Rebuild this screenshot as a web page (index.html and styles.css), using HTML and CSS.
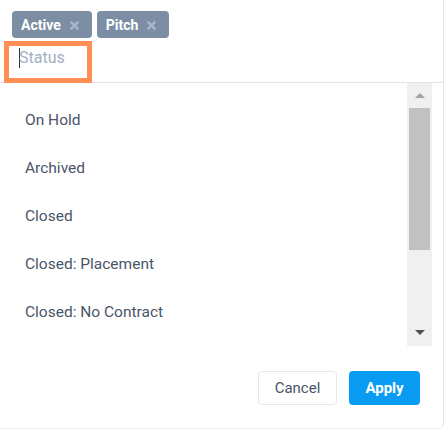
FILE: index.html
```html
<!DOCTYPE html>
<html>
<head>
<meta charset="utf-8">
<link rel="stylesheet" href="styles.css">
</head>
<body>
<div class="panel">
  <div class="tags">
    <span class="chip">Active <svg class="chip-x" viewBox="0 0 10 10"><path d="M1.5 1.5 L8.5 8.5 M8.5 1.5 L1.5 8.5"/></svg></span>
    <span class="chip">Pitch <svg class="chip-x" viewBox="0 0 10 10"><path d="M1.5 1.5 L8.5 8.5 M8.5 1.5 L1.5 8.5"/></svg></span>
  </div>
  <div class="search-row">
    <div class="search-box"><span class="cursor"></span><span class="placeholder">Status</span></div>
  </div>
  <div class="list-wrap">
    <ul class="list">
      <li>On Hold</li>
      <li>Archived</li>
      <li>Closed</li>
      <li>Closed: Placement</li>
      <li>Closed: No Contract</li>
    </ul>
    <div class="scrollbar">
      <div class="arrow arrow-up"></div>
      <div class="track"><div class="thumb"></div></div>
      <div class="arrow arrow-down"></div>
    </div>
  </div>
  <div class="footer">
    <button class="btn btn-cancel">Cancel</button>
    <button class="btn btn-apply">Apply</button>
  </div>
</div>
</body>
</html>
```

FILE: styles.css
```css
html, body {
  margin: 0;
  padding: 0;
  background: #ffffff;
}
body {
  font-family: Roboto, "Liberation Sans", sans-serif;
  width: 447px;
  height: 430px;
  overflow: hidden;
}
.panel {
  width: 444px;
  height: 429px;
  box-sizing: border-box;
  border-right: 1px solid #e3e6ea;
  border-bottom: 1px solid #eef0f2;
  border-radius: 0 0 6px 0;
  display: flex;
  flex-direction: column;
}
.tags {
  display: flex;
  gap: 5px;
  padding: 11px 12px 0;
}
.chip {
  display: inline-flex;
  align-items: center;
  height: 27px;
  padding: 0 12px 0 9px;
  background: #7b8ea4;
  color: #ffffff;
  font-weight: 700;
  font-size: 14px;
  border-radius: 4px;
  box-sizing: border-box;
}
.chip-x {
  width: 11px;
  height: 11px;
  margin-left: 8px;
  margin-top: 1px;
  stroke: #aab7c6;
  stroke-width: 2.2;
  fill: none;
}
.search-row {
  height: 44px;
  border-bottom: 1px solid #e2e5e9;
  display: flex;
  align-items: stretch;
}
.search-box {
  width: 88px;
  margin: 3px 0 -1px 4px;
  box-sizing: border-box;
  border: 5px solid #ff8f55;
  display: flex;
  align-items: center;
  padding-left: 10px;
  padding-bottom: 9px;
}
.cursor {
  width: 1px;
  height: 20px;
  background: #333333;
  margin-right: -1px;
}
.placeholder {
  color: #a3b0c0;
  font-size: 16px;
}
.list-wrap {
  display: flex;
  height: 263px;
  padding-right: 11px;
}
.list {
  flex: 1;
  list-style: none;
  margin: 0;
  padding: 13px 0 0 25px;
  overflow: hidden;
}
.list li {
  height: 48px;
  line-height: 48px;
  font-size: 15.5px;
  color: #4a5568;
}
.scrollbar {
  width: 25px;
  background: #f0f0f0;
  display: flex;
  flex-direction: column;
  align-items: center;
}
.arrow {
  width: 0;
  height: 0;
  border-left: 5px solid transparent;
  border-right: 5px solid transparent;
}
.arrow-up {
  border-bottom: 5px solid #a3a3a3;
  margin: 10px 0 10px;
}
.arrow-down {
  border-top: 5px solid #505050;
  margin: 0 0 11px;
}
.track {
  flex: 1;
  width: 21px;
}
.thumb {
  height: 142px;
  background: #c1c1c1;
}
.footer {
  display: flex;
  justify-content: flex-end;
  gap: 12px;
  padding: 25px 23px 0 0;
}
.btn {
  height: 34px;
  border-radius: 4px;
  font-family: Roboto, "Liberation Sans", sans-serif;
  font-size: 15px;
  box-sizing: border-box;
  cursor: pointer;
}
.btn-cancel {
  width: 79px;
  background: #ffffff;
  border: 1px solid #e2e8f0;
  color: #4a5568;
}
.btn-apply {
  width: 71px;
  background: #0a9cf2;
  border: none;
  color: #ffffff;
  font-weight: 700;
}
```
